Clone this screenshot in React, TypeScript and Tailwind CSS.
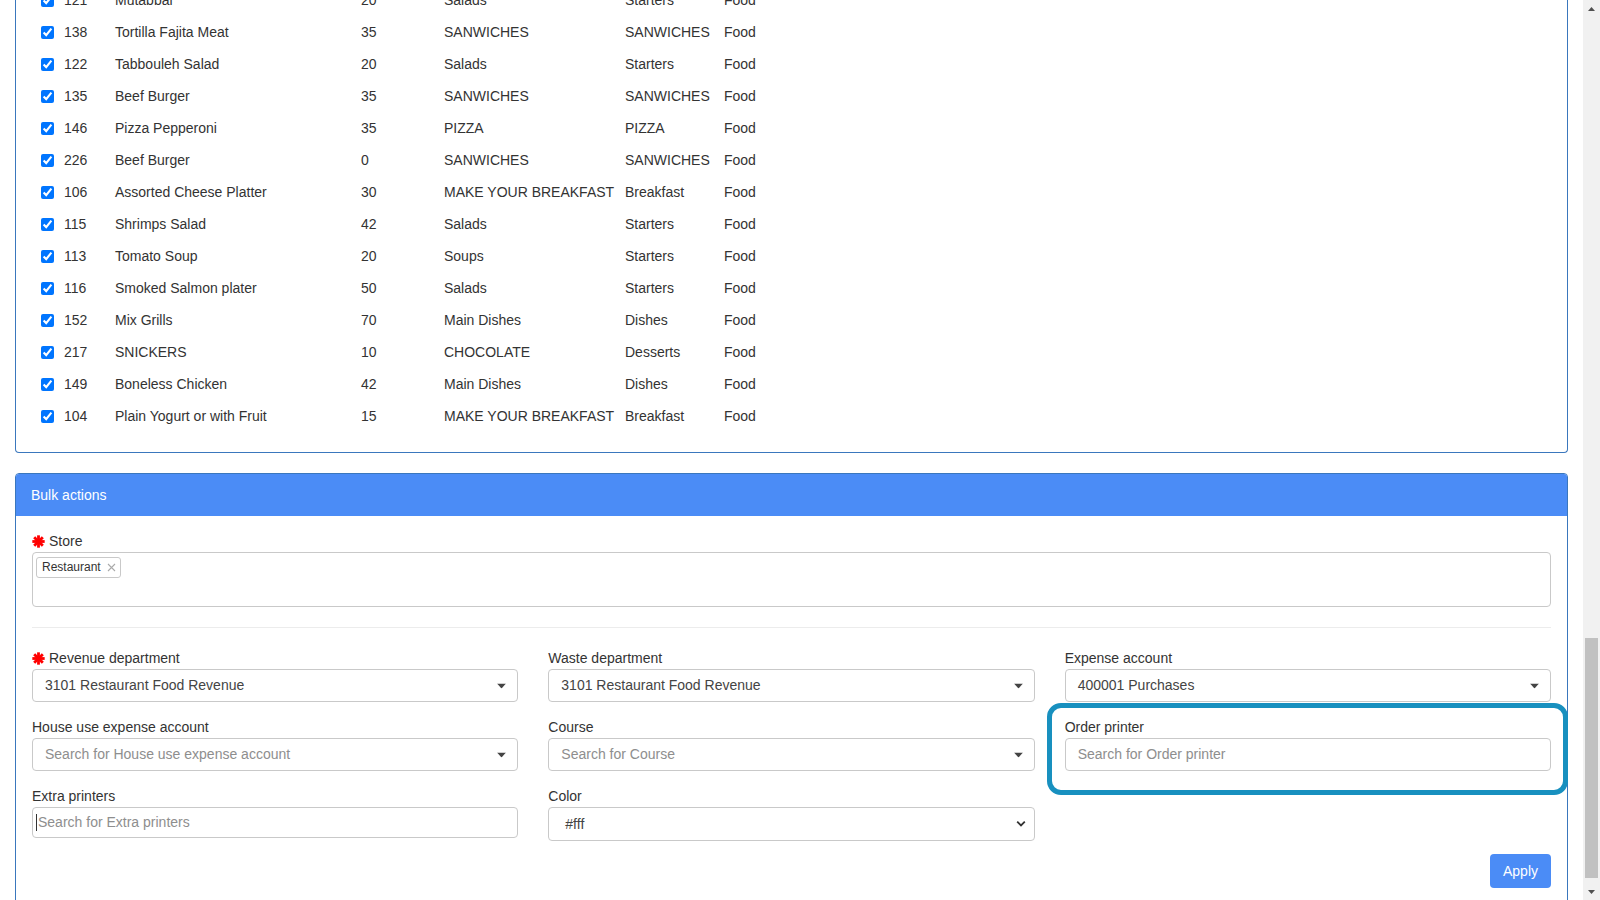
import type { ReactNode } from 'react'

interface Item {
  id: number
  name: string
  price: number
  category: string
  group: string
  type: string
}

const items: Item[] = [
  { id: 121, name: 'Mutabbal', price: 20, category: 'Salads', group: 'Starters', type: 'Food' },
  { id: 138, name: 'Tortilla Fajita Meat', price: 35, category: 'SANWICHES', group: 'SANWICHES', type: 'Food' },
  { id: 122, name: 'Tabbouleh Salad', price: 20, category: 'Salads', group: 'Starters', type: 'Food' },
  { id: 135, name: 'Beef Burger', price: 35, category: 'SANWICHES', group: 'SANWICHES', type: 'Food' },
  { id: 146, name: 'Pizza Pepperoni', price: 35, category: 'PIZZA', group: 'PIZZA', type: 'Food' },
  { id: 226, name: 'Beef Burger', price: 0, category: 'SANWICHES', group: 'SANWICHES', type: 'Food' },
  { id: 106, name: 'Assorted Cheese Platter', price: 30, category: 'MAKE YOUR BREAKFAST', group: 'Breakfast', type: 'Food' },
  { id: 115, name: 'Shrimps Salad', price: 42, category: 'Salads', group: 'Starters', type: 'Food' },
  { id: 113, name: 'Tomato Soup', price: 20, category: 'Soups', group: 'Starters', type: 'Food' },
  { id: 116, name: 'Smoked Salmon plater', price: 50, category: 'Salads', group: 'Starters', type: 'Food' },
  { id: 152, name: 'Mix Grills', price: 70, category: 'Main Dishes', group: 'Dishes', type: 'Food' },
  { id: 217, name: 'SNICKERS', price: 10, category: 'CHOCOLATE', group: 'Desserts', type: 'Food' },
  { id: 149, name: 'Boneless Chicken', price: 42, category: 'Main Dishes', group: 'Dishes', type: 'Food' },
  { id: 104, name: 'Plain Yogurt or with Fruit', price: 15, category: 'MAKE YOUR BREAKFAST', group: 'Breakfast', type: 'Food' },
]

function RequiredMark() {
  return (
    <svg width="13" height="13" viewBox="0 0 12 12" className="mr-[4px] shrink-0">
      <g stroke="#f00" strokeWidth="2.6" strokeLinecap="butt">
        <line x1="6" y1="0.3" x2="6" y2="11.7" />
        <line x1="0.3" y1="6" x2="11.7" y2="6" />
        <line x1="2" y1="2" x2="10" y2="10" />
        <line x1="10" y1="2" x2="2" y2="10" />
      </g>
    </svg>
  )
}

function Label({ children, required }: { children: ReactNode; required?: boolean }) {
  return (
    <div className="flex h-5 items-center text-[14px] text-[#333]">
      {required && <RequiredMark />}
      {children}
    </div>
  )
}

function Caret() {
  return (
    <svg width="9" height="5" viewBox="0 0 9 5" className="absolute right-[11px] top-1/2 -translate-y-1/2">
      <path d="M0 0 L9 0 L4.5 5 Z" fill="#444" />
    </svg>
  )
}

function Select2({ value, placeholder }: { value?: string; placeholder?: string }) {
  return (
    <div className="relative mt-px flex h-[33px] items-center rounded-[4px] border border-[#c9c9c9] bg-white pl-3 text-[14px]">
      {value ? <span className="text-[#444]">{value}</span> : <span className="text-[#8e8e8e]">{placeholder}</span>}
      <Caret />
    </div>
  )
}

function Field({ label, required, children }: { label: string; required?: boolean; children: ReactNode }) {
  return (
    <div className="mb-[15px]">
      <Label required={required}>{label}</Label>
      {children}
    </div>
  )
}

function Scrollbar() {
  return (
    <div className="flex w-[17px] shrink-0 flex-col bg-[#f1f1f1]">
      <div className="flex h-[17px] items-center justify-center">
        <svg width="7" height="4" viewBox="0 0 7 4">
          <path d="M0 4 L3.5 0 L7 4 Z" fill="#505050" />
        </svg>
      </div>
      <div className="relative flex-1">
        <div className="absolute left-[2px] right-[2px] top-[621px] h-[240px] bg-[#c1c1c1]" />
      </div>
      <div className="flex h-[17px] items-center justify-center">
        <svg width="7" height="4" viewBox="0 0 7 4">
          <path d="M0 0 L3.5 4 L7 0 Z" fill="#505050" />
        </svg>
      </div>
    </div>
  )
}

export default function App() {
  return (
    <div
      className="flex h-[900px] w-full overflow-hidden bg-white"
      style={{ fontFamily: '"Liberation Sans", Arial, sans-serif' }}
    >
      <div className="flex-1 px-[15px]">
        <div className="-mt-[16px] rounded-b-[4px] border border-t-0 border-[#3a77bd] pb-[20px] pl-[25px]">
          {items.map((item) => (
            <div key={item.id} className="flex h-8 items-center text-[14px] text-[#333]">
              <div className="flex w-[23px] items-center">
                <input type="checkbox" checked readOnly className="m-0 h-[13px] w-[13px] accent-[#0075ff]" />
              </div>
              <div className="w-[51px]">{item.id}</div>
              <div className="w-[246px]">{item.name}</div>
              <div className="w-[83px]">{item.price}</div>
              <div className="w-[181px]">{item.category}</div>
              <div className="w-[99px]">{item.group}</div>
              <div>{item.type}</div>
            </div>
          ))}
        </div>

        <div className="mt-[20px] rounded-t-[4px] border border-[#3a77bd]">
          <div className="flex h-[42px] items-center rounded-t-[3px] bg-[#4b8cf6] px-[15px] text-[14px] text-white">
            Bulk actions
          </div>
          <div className="px-[16px] pb-[60px] pt-[15px]">
            <Label required>Store</Label>
            <div className="mt-px h-[55px] rounded-[4px] border border-[#c9c9c9] bg-white px-[3px] pt-[1px]">
              <span className="inline-flex h-[21px] items-center rounded-[3px] border border-[#c9c9c9] bg-white pl-[5px] pr-[4px] text-[12px] text-[#333]">
                Restaurant
                <svg width="9" height="9" viewBox="0 0 9 9" className="ml-[6px]">
                  <path d="M1 1 L8 8 M8 1 L1 8" stroke="#aaa" strokeWidth="1.1" />
                </svg>
              </span>
            </div>
            <div className="mb-[20px] mt-[20px] h-px bg-[#ececec]" />

            <div className="grid grid-cols-3 gap-x-[30px]">
              <div>
                <Field label="Revenue department" required>
                  <Select2 value="3101 Restaurant Food Revenue" />
                </Field>
                <Field label="House use expense account">
                  <Select2 placeholder="Search for House use expense account" />
                </Field>
                <Field label="Extra printers">
                  <div className="mt-px flex h-[31px] items-center rounded-[4px] border border-[#c9c9c9] bg-white pl-[3px] text-[14px]">
                    <span className="mr-px h-[17px] w-px bg-[#333]" />
                    <span className="text-[#8e8e8e]">Search for Extra printers</span>
                  </div>
                </Field>
              </div>
              <div>
                <Field label="Waste department">
                  <Select2 value="3101 Restaurant Food Revenue" />
                </Field>
                <Field label="Course">
                  <Select2 placeholder="Search for Course" />
                </Field>
                <Field label="Color">
                  <div className="relative mt-px flex h-[34px] items-center rounded-[4px] border border-[#c9c9c9] bg-white pl-[16px] text-[14px] text-[#444]">
                    #fff
                    <svg width="10" height="7" viewBox="0 0 10 7" className="absolute right-[8px] top-1/2 -translate-y-1/2">
                      <path d="M1.2 1.2 L5 5 L8.8 1.2" stroke="#333" strokeWidth="1.8" fill="none" />
                    </svg>
                  </div>
                </Field>
              </div>
              <div>
                <Field label="Expense account">
                  <Select2 value="400001 Purchases" />
                </Field>
                <div className="relative mb-[15px]">
                  <Label>Order printer</Label>
                  <div className="mt-px flex h-[33px] items-center rounded-[4px] border border-[#c9c9c9] bg-white pl-3 text-[14px] text-[#8e8e8e]">
                    Search for Order printer
                  </div>
                  <div className="pointer-events-none absolute -bottom-[24px] -left-[18px] -right-[17px] -top-[14px] rounded-[14px] border-[5px] border-[#1890bf]" />
                </div>
              </div>
            </div>

            <div className="-mt-[2px] flex justify-end">
              <button className="h-[34px] w-[61px] rounded-[4px] bg-[#4b8cf6] text-[14px] text-white">Apply</button>
            </div>
          </div>
        </div>
      </div>
      <Scrollbar />
    </div>
  )
}
